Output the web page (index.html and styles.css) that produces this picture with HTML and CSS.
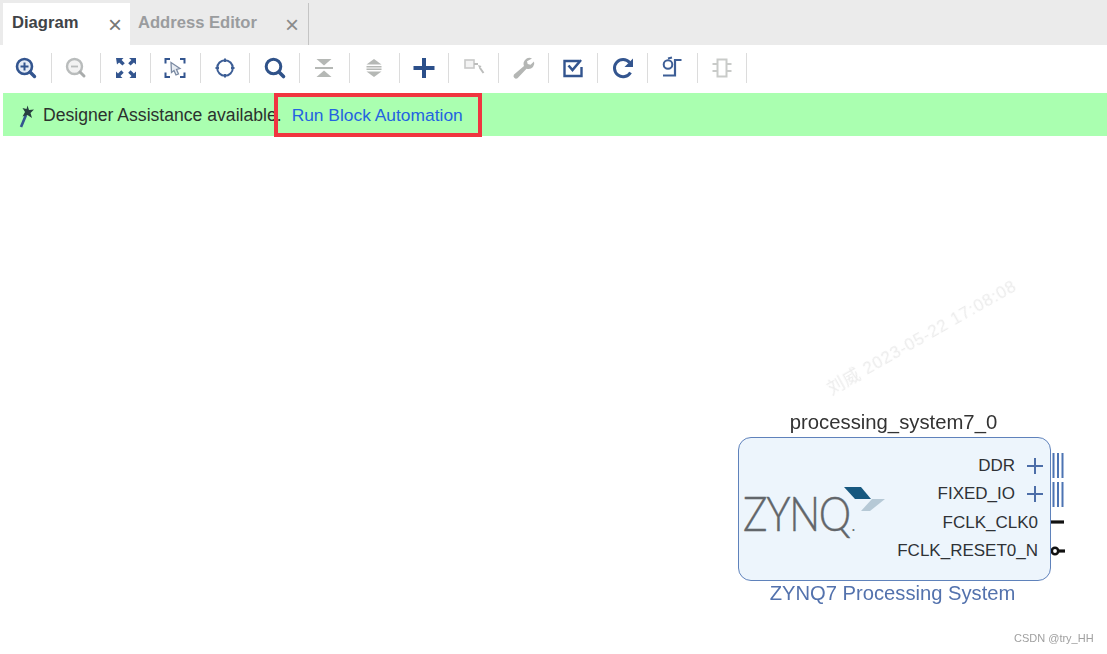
FILE: index.html
```html
<!DOCTYPE html>
<html lang="en">
<head>
<meta charset="utf-8">
<title>Diagram</title>
<link rel="stylesheet" href="styles.css">
</head>
<body>
<div class="page">
  <div class="tabbar">
    <div class="tab tab-active"><span class="tab-label">Diagram</span><span class="tab-close">×</span></div>
    <div class="tab tab-idle"><span class="tab-label">Address Editor</span><span class="tab-close">×</span></div>
  </div>

  <div class="toolbar">
    <div class="tool"><svg width="26" height="26" viewBox="0 0 26 26"><circle cx="11.500" cy="11.500" r="7.500" fill="#e6ecf5" stroke="#33558f" stroke-width="2.600"/><path d="M7.500 11.500h8M11.500 7.500v8" stroke="#33558f" stroke-width="2"/><path d="M17 17l4.500 4.500" stroke="#33558f" stroke-width="3.400" stroke-linecap="round"/></svg></div>
    <div class="tool"><svg width="26" height="26" viewBox="0 0 26 26"><circle cx="11.500" cy="11.500" r="7.500" fill="#f2f2f2" stroke="#b9bcbc" stroke-width="2.400"/><path d="M8 11.500h7" stroke="#b9bcbc" stroke-width="1.800"/><path d="M17 17l4 4" stroke="#a9acac" stroke-width="3" stroke-linecap="round"/></svg></div>
    <div class="tool"><svg width="26" height="26" viewBox="0 0 26 26" fill="#33558f"><path d="M3 3h7.500L8.600 5l3.200 3.200-2.400 2.400L6.100 7.400 4 9.500z"/><path d="M23 3v6.500L20.900 7.400l-3.300 3.200-2.400-2.400L18.400 5 16 3z"/><path d="M3 23v-6.500L5 18.600l3.300-3.300 2.400 2.400L7.400 21l2.100 2z"/><path d="M23 23h-6.500l2-2-3.300-3.300 2.400-2.400 3.300 3.300 2.100-2.100z"/></svg></div>
    <div class="tool"><svg width="26" height="26" viewBox="0 0 26 26" fill="none"><path d="M8 4H3.500v4.500M18 4h4.500v4.500M3.500 17.500V22H8M22.500 17.500V22H18" stroke="#33558f" stroke-width="2"/><path d="M9 7.500l9 6-3.500 1 2 4.500-2.500 1-2-4.500-2.500 2z" fill="#e8ecf2" stroke="#7c8ba3" stroke-width="1.300"/></svg></div>
    <div class="tool"><svg width="26" height="26" viewBox="0 0 26 26" fill="none"><circle cx="13" cy="13" r="7.800" stroke="#3d5e96" stroke-width="2"/><path d="M13 3.500v3.500M13 19v3.500M3.500 13H7M19 13h3.500" stroke="#3d5e96" stroke-width="2"/></svg></div>
    <div class="tool"><svg width="26" height="26" viewBox="0 0 26 26" fill="none"><circle cx="11.500" cy="11.500" r="7.300" stroke="#2f5289" stroke-width="3"/><path d="M17 17l4.500 4.500" stroke="#2f5289" stroke-width="3.600" stroke-linecap="round"/></svg></div>
    <div class="tool"><svg width="26" height="26" viewBox="0 0 26 26" fill="#b5b8b5"><path d="M5.500 4h15L13 10.500z"/><path d="M13 15.500L20.500 22h-15z"/><path d="M4 12h18v2H4z"/></svg></div>
    <div class="tool"><svg width="26" height="26" viewBox="0 0 26 26" fill="#b5b8b5"><path d="M13 4l7.500 5.500h-15z"/><path d="M13 22l-7.500-5.500h15z"/><path d="M5.500 11h15v1.500h-15zM5.500 13.500h15V15h-15z"/></svg></div>
    <div class="tool"><svg width="26" height="26" viewBox="0 0 26 26" fill="#2b4f8a"><path d="M11 3h4v8h8.500v4H15v8h-4v-8H2.500v-4H11z"/></svg></div>
    <div class="tool"><svg width="26" height="26" viewBox="0 0 26 26" fill="none"><rect x="4" y="5" width="9" height="8" fill="#f3f3f3" stroke="#c8c9c8" stroke-width="1.600"/><path d="M13 9h4M19 13l3.500 5" stroke="#bcbdbc" stroke-width="2"/><path d="M17 10l3.500 1-2 3z" fill="#bcbdbc"/></svg></div>
    <div class="tool"><svg width="26" height="26" viewBox="0 0 26 26" fill="#b4b6b4"><path d="M22 3.500a6 6 0 0 0-7 1.500 5.800 5.800 0 0 0-1 6L4 19.500a2.600 2.600 0 0 0 3.500 3.700l9-9.500a6 6 0 0 0 6.500-1.700 5.800 5.800 0 0 0 1-5.500l-3.500 3.300-2.800-.8-.7-2.800z"/></svg></div>
    <div class="tool"><svg width="26" height="26" viewBox="0 0 26 26" fill="none"><path d="M21.500 12v9h-17V6H19" stroke="#33558f" stroke-width="2.400"/><path d="M8.500 10.500l4 4.500 8.500-10" stroke="#33558f" stroke-width="2.600"/></svg></div>
    <div class="tool"><svg width="26" height="26" viewBox="0 0 26 26" fill="none"><path d="M20.500 17.500A8.600 8.600 0 1 1 19.600 7.500" stroke="#33558f" stroke-width="3"/><path d="M23 3.500V12h-8.500z" fill="#33558f"/></svg></div>
    <div class="tool"><svg width="26" height="26" viewBox="0 0 26 26" fill="none"><circle cx="9" cy="9.500" r="4.300" stroke="#3d5e96" stroke-width="2"/><path d="M9 3.500l4-1M22.500 5h-6.500v15.500H4" stroke="#3d5e96" stroke-width="2.200"/></svg></div>
    <div class="tool"><svg width="26" height="26" viewBox="0 0 26 26" fill="none"><path d="M8.500 4.500h9v17h-9zM3.500 9h5M3.500 16h5M17.500 9h5M17.500 16h5" stroke="#c9cbc9" stroke-width="2"/></svg></div>
  </div>

  <div class="banner">
    <svg class="wand" width="18" height="24" viewBox="0 0 18 24"><path d="M3 23L8 11" stroke="#33558f" stroke-width="2.600"/><path d="M9.500 1.500l1.500 4.500 5-.5-3.500 3.500 1.500 5-4.500-3-5 1.500 2.500-4.500L4.500 4l4 1z" fill="#27403f"/></svg>
    <span class="banner-text">Designer Assistance available.</span>
    <a class="banner-link">Run Block Automation</a>
    <span class="highlight"></span>
  </div>

  <div class="canvas">
    <div class="watermark">刘威 2023-05-22 17:08:08</div>

    <div class="node">
      <div class="node-title">processing_system7_0</div>
      <div class="node-box">
        <div class="logo">
          <span class="logo-text">ZYNQ</span><span class="logo-tm">.</span>
          <svg class="logo-mark" width="42" height="26" viewBox="0 0 42 26"><path d="M0 0h17l10 12H11z" fill="#17587f"/><path d="M28 12h13L26 24h-9z" fill="#b6c9d6"/></svg>
        </div>
        <div class="ports">
          <div class="port"><span>DDR</span><svg class="port-plus" width="16" height="16" viewBox="0 0 16 16"><path d="M8 0v16M0 8h16" stroke="#4d6ea8" stroke-width="2"/></svg></div>
          <div class="port"><span>FIXED_IO</span><svg class="port-plus" width="16" height="16" viewBox="0 0 16 16"><path d="M8 0v16M0 8h16" stroke="#4d6ea8" stroke-width="2"/></svg></div>
          <div class="port port-plain"><span>FCLK_CLK0</span></div>
          <div class="port port-plain"><span>FCLK_RESET0_N</span></div>
        </div>
        <svg class="pins" width="16" height="110" viewBox="0 0 16 110" fill="none">
          <path d="M2.500 0v25M7 0v25M11.500 0v25M2.500 29v25M7 29v25M11.500 29v25" stroke="#4d74b3" stroke-width="2"/>
          <path d="M0 69h13" stroke="#111" stroke-width="3.200"/>
          <circle cx="4" cy="98" r="3.200" stroke="#111" stroke-width="2.600"/>
          <path d="M6 98h8" stroke="#111" stroke-width="3.200"/>
        </svg>
      </div>
      <div class="node-sub">ZYNQ7 Processing System</div>
    </div>

    <div class="credit">CSDN @try_HH</div>
  </div>
</div>
</body>
</html>
```

FILE: styles.css
```css
* { box-sizing: border-box; }

html, body {
  margin: 0;
  height: 100%;
  background: #fff;
  overflow: hidden;
}

.page {
  display: flex;
  flex-direction: column;
  width: 1107px;
  height: 654px;
  font-family: "Liberation Sans", Arial, sans-serif;
  filter: blur(0.6px);
}

.tabbar {
  display: flex;
  height: 45px;
  padding: 3px 0 0 3px;
  background: #ebebeb;
  flex: none;
}

.tab {
  display: flex;
  align-items: center;
  justify-content: space-between;
  height: 42px;
  font-size: 16.6px;
  font-weight: 700;
}

.tab-active {
  width: 127px;
  padding: 0 8px 2px 9px;
  background: #fff;
  color: #3f4347;
}

.tab-idle {
  width: 179px;
  padding: 0 9px 2px 8px;
  border-right: 1px solid #c4c4c4;
  color: #9a9c9e;
}

.tab-close {
  padding-top: 4px;
  font-size: 24px;
  font-weight: 400;
  line-height: 22px;
  color: #777;
}

.tab-idle .tab-close { color: #8a8a8a; }

.toolbar {
  display: flex;
  align-items: center;
  height: 48px;
  padding: 0 0 3px 2px;
  background: #fff;
  flex: none;
}

.tool {
  display: flex;
  align-items: center;
  justify-content: center;
  width: 49.7px;
  height: 30px;
  border-right: 1px solid #dcdcdc;
}

.banner {
  position: relative;
  display: flex;
  align-items: center;
  height: 43px;
  margin-left: 3px;
  padding: 2px 0 0 15px;
  background: #aaffb0;
  font-size: 17.6px;
  flex: none;
}

.wand { flex: none; margin-right: 7px; }

.banner-text { color: #2c322e; }

.banner-link {
  margin-left: 10px;
  font-size: 17.4px;
  color: #2463e0;
}

.highlight {
  position: absolute;
  left: 271px;
  top: 0;
  width: 208px;
  height: 44px;
  border: 4px solid #f03540;
}

.canvas {
  position: relative;
  flex: 1;
}

.watermark {
  position: absolute;
  left: 815px;
  top: 192px;
  width: 214px;
  font-family: "Liberation Sans", "Noto Sans CJK SC", sans-serif;
  font-size: 17px;
  letter-spacing: 0.8px;
  line-height: 20px;
  white-space: nowrap;
  color: #ececec;
  transform: rotate(-29.5deg);
}

.node {
  position: absolute;
  left: 738px;
  top: 274px;
  display: flex;
  flex-direction: column;
  align-items: center;
  width: 313px;
}

.node-title {
  height: 27px;
  margin-right: 2px;
  padding-top: 1px;
  font-size: 20.300px;
  line-height: 23px;
  white-space: nowrap;
  color: #333;
}

.node-box {
  position: relative;
  display: flex;
  justify-content: flex-end;
  width: 313px;
  height: 144px;
  padding: 13.5px 12px 0 0;
  border: 1.500px solid #5f82bb;
  border-radius: 13px;
  background: #edf5fc;
}

.logo {
  position: absolute;
  left: 4px;
  top: 50px;
  display: flex;
  align-items: baseline;
  height: 50px;
}

.logo-text {
  display: inline-block;
  font-family: "Lato", "Liberation Sans", sans-serif;
  font-size: 47px;
  font-weight: 300;
  line-height: 50px;
  letter-spacing: -1.5px;
  color: #62666a;
  -webkit-text-stroke: 0.4px #62666a;
  transform: scaleX(0.87);
  transform-origin: left center;
}

.logo-tm {
  margin-left: -14px;
  font-size: 12px;
  font-weight: 700;
  color: #6a6e72;
}

.logo-mark {
  position: absolute;
  left: 101px;
  top: -1px;
}

.ports {
  display: flex;
  flex-direction: column;
  align-items: flex-end;
  font-size: 17px;
  color: #2f3236;
}

.port {
  display: flex;
  align-items: center;
  height: 28.500px;
}

.port-plus { margin-left: 12px; margin-right: -5px; }

.pins {
  position: absolute;
  left: 312px;
  top: 15px;
}

.node-sub {
  margin-right: 4px;
  font-size: 20.200px;
  line-height: 24px;
  white-space: nowrap;
  color: #5372ad;
}

.credit {
  position: absolute;
  left: 1014px;
  top: 496px;
  font-size: 11px;
  color: #a0a0a0;
}
```
